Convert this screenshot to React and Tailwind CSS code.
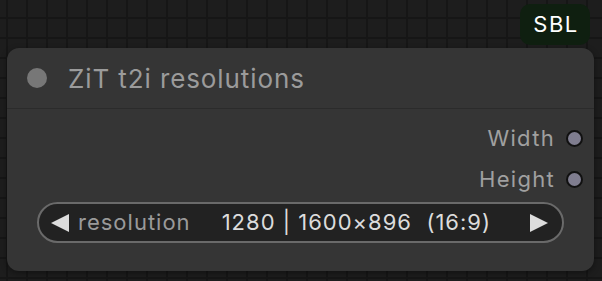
import React from "react";

function OutputSlot({ label }) {
  return (
    <div className="flex h-[41px] items-center justify-end gap-[11px] pr-[11px]">
      <span className="text-[22px] tracking-[1.3px] text-[#a0a0a0]">{label}</span>
      <span className="h-[17px] w-[17px] rounded-full border-2 border-[#111] bg-[#7f7d8f]" />
    </div>
  );
}

function ComboWidget({ name, value }) {
  return (
    <div className="mx-[30px] mt-[2px] flex h-[41px] items-center rounded-full border-2 border-[#6a6a6a] bg-[#222222] pl-[11px] pr-[13px]">
      <svg width="20" height="20" viewBox="0 0 20 20" className="shrink-0">
        <path d="M1 10 L19 1 L19 19 Z" fill="#dddddd" />
      </svg>
      <span className="ml-[8px] text-[22px] tracking-[1px] text-[#9a9a9a]">{name}</span>
      <span className="ml-auto text-[22px] tracking-[1px] text-[#dcdcdc] whitespace-pre">{value}</span>
      <svg width="20" height="20" viewBox="0 0 20 20" className="ml-[38px] shrink-0">
        <path d="M19 10 L1 1 L1 19 Z" fill="#dddddd" />
      </svg>
    </div>
  );
}

export default function App() {
  return (
    <div
      className="relative h-[281px] w-[602px] overflow-hidden bg-[#1d1d1d] bg-[image:linear-gradient(#161616_2px,transparent_2px),linear-gradient(90deg,#161616_2px,transparent_2px)] bg-[size:20px_20px] bg-[position:6px_17px] pt-[48px] pl-[7px]"
      style={{ fontFamily: "Inter, 'Noto Sans', sans-serif" }}
    >
      <div className="absolute right-[12px] top-[4px] flex h-[41px] w-[70px] items-center justify-center rounded-[10px] bg-[#0f1f10] pl-[2px] text-[22px] tracking-[1.5px] text-white">
        SBL
      </div>

      <div className="flex h-[223px] w-[587px] flex-col rounded-[12px] bg-[#353535] shadow-[0_2px_6px_rgba(0,0,0,0.4)]">
        <div className="flex h-[61px] items-center border-b border-[#2b2b2b] pl-[20px]">
          <span className="h-[20px] w-[20px] rounded-full bg-[#777777]" />
          <span className="ml-[21px] text-[26px] tracking-[0.9px] text-[#9b9b9b]">ZiT t2i resolutions</span>
        </div>
        <div className="flex flex-col pt-[9px]">
          <OutputSlot label="Width" />
          <OutputSlot label="Height" />
          <ComboWidget name="resolution" value={"1280 | 1600×896  (16:9)"} />
        </div>
      </div>
    </div>
  );
}
